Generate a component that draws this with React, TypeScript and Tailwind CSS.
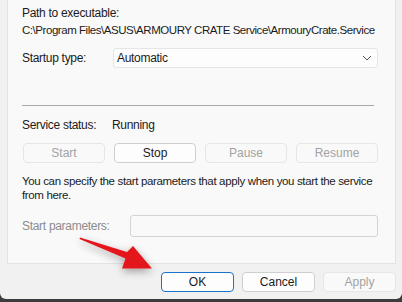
import React from "react";

const font = { fontFamily: '"Liberation Sans", Arial, sans-serif' };

function Btn({ label, disabled, primary, className = "" }: { label: string; disabled?: boolean; primary?: boolean; className?: string }) {
  return (
    <button
      className={`h-[20px] rounded-[4px] border text-[12px] leading-none flex items-center justify-center ${
        primary
          ? "border-[#1a73c8] bg-[#fdfdfd] text-[#1b1b1b]"
          : disabled
          ? "border-[#e6e6e6] bg-[#f9f9f9] text-[#a3a3a3]"
          : "border-[#cfcfcf] bg-[#fdfdfd] text-[#1b1b1b]"
      } ${className}`}
    >
      {label}
    </button>
  );
}

export default function App() {
  return (
    <div className="w-[402px] h-[302px] bg-[#3c3c3c] overflow-hidden relative text-[#1b1b1b]" style={font}>
      <div className="h-[299px] bg-[#f1f1f1] rounded-b-[6px] flex flex-col">
        {/* inner panel */}
        <div className="ml-[7px] w-[389px] h-[264px] bg-[#f9f9f9] border-r border-b border-l border-[#e3e3e3] pl-[14px] pr-[17px] text-[12px] tracking-[-0.3px]">
          <div className="pt-[5px] leading-[16px]">Path to executable:</div>
          <div className="leading-[16px] mt-[1px] whitespace-nowrap text-[11.5px] tracking-[-0.45px]">C:\Program Files\ASUS\ARMOURY CRATE Service\ArmouryCrate.Service</div>

          <div className="flex items-center mt-[10px] h-[20px]">
            <div className="w-[91px]">Startup type:</div>
            <div className="flex-1 h-[20px] bg-[#fdfdfd] border border-[#e5e5e5] rounded-[3px] flex items-center justify-between pl-[3px] pr-[5px]">
              <span>Automatic</span>
              <svg width="10" height="6" viewBox="0 0 10 6" fill="none" stroke="#555" strokeWidth="1">
                <path d="M1 1l4 4 4-4" />
              </svg>
            </div>
          </div>

          <div className="mt-[37px] h-px bg-[#a8a8a8] mr-[4px]" />

          <div className="flex items-center mt-[11px] leading-[16px]">
            <div className="w-[90px]">Service status:</div>
            <div>Running</div>
          </div>

          <div className="grid grid-cols-4 gap-[9px] mt-[10px] pl-[1px] tracking-normal">
            <Btn label="Start" disabled />
            <Btn label="Stop" />
            <Btn label="Pause" disabled />
            <Btn label="Resume" disabled />
          </div>

          <div className="mt-[11px] leading-[14px] whitespace-nowrap text-[11.5px] tracking-[-0.35px]">
            You can specify the start parameters that apply when you start the service
            <br />
            from here.
          </div>

          <div className="flex items-center mt-[13px]">
            <div className="w-[108px] text-[#8c8c8c]">Start parameters:</div>
            <div className="flex-1 h-[22px] border border-[#d4d4d4] rounded-[3px] bg-[#f9f9f9]" />
          </div>
        </div>

        {/* bottom buttons */}
        <div className="flex justify-end gap-[8px] pr-[6px] mt-[8px]">
          <Btn label="OK" primary className="w-[73px]" />
          <Btn label="Cancel" className="w-[73px]" />
          <Btn label="Apply" disabled className="w-[73px]" />
        </div>
      </div>

      {/* red arrow overlay */}
      <svg className="absolute left-0 top-0" width="402" height="302" viewBox="0 0 402 302">
        <defs>
          <filter id="sh" x="-50%" y="-50%" width="200%" height="200%">
            <feGaussianBlur in="SourceAlpha" stdDeviation="4" />
            <feOffset dx="0" dy="3" />
            <feComponentTransfer>
              <feFuncA type="linear" slope="0.35" />
            </feComponentTransfer>
            <feMerge>
              <feMergeNode />
              <feMergeNode in="SourceGraphic" />
            </feMerge>
          </filter>
        </defs>
        <path
          d="M80 237.5 L127 252 L133 246 L152 268.5 L122 268.5 L125.5 258.5 L79.5 239 Z"
          fill="#e3161e"
          filter="url(#sh)"
        />
      </svg>
    </div>
  );
}
